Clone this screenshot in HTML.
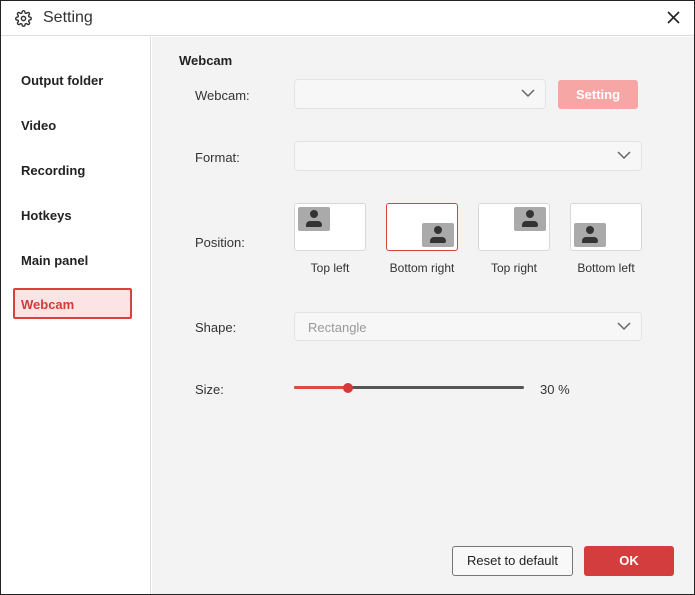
<!DOCTYPE html>
<html><head><style>
*{margin:0;padding:0;box-sizing:border-box}
body{width:695px;height:595px;font-family:"Liberation Sans",sans-serif;background:#fff;position:relative;overflow:hidden}
.a{position:absolute}
.win{left:0;top:0;width:695px;height:595px;border:1px solid #222;}
.lbl{font-size:13px;color:#333}
.nav{left:21px;font-size:13px;font-weight:bold;color:#222}
.sel{border:1px solid #e3e3e3;border-radius:4px;background:#f7f7f7}
.chev{position:absolute;right:10px;top:8px}
.th{width:72px;height:48px;background:#fff;border:1px solid #d8d8d8;border-radius:3px}
.pv{position:absolute;width:32px;height:24px;background:#aaa;border-radius:2px}
.cap{font-size:12px;color:#333;width:100px;text-align:center}
</style></head><body>
<div class="a" style="left:0;top:0;width:695px;height:36px;background:#fff;border-bottom:1px solid #ddd"></div>
<svg class="a" style="left:15px;top:10px" width="17" height="17" viewBox="0 0 24 24" fill="none" stroke="#333" stroke-width="2"><circle cx="12" cy="12" r="3"/><path d="M19.4 15a1.7 1.7 0 0 0 .3 1.8l.1.1a2 2 0 1 1-2.8 2.8l-.1-.1a1.7 1.7 0 0 0-1.800-.3 1.7 1.7 0 0 0-1 1.5V21a2 2 0 1 1-4 0v-.1a1.7 1.7 0 0 0-1.1-1.5 1.7 1.7 0 0 0-1.8.3l-.1.1a2 2 0 1 1-2.8-2.8l.1-.1a1.7 1.7 0 0 0 .3-1.8 1.7 1.7 0 0 0-1.5-1H3a2 2 0 1 1 0-4h.1a1.7 1.7 0 0 0 1.5-1.1 1.7 1.7 0 0 0-.3-1.8l-.1-.1a2 2 0 1 1 2.8-2.8l.1.1a1.7 1.7 0 0 0 1.8.3H9a1.7 1.7 0 0 0 1-1.5V3a2 2 0 1 1 4 0v.1a1.7 1.7 0 0 0 1 1.5 1.7 1.7 0 0 0 1.8-.3l.1-.1a2 2 0 1 1 2.8 2.8l-.1.1a1.7 1.7 0 0 0-.3 1.8V9a1.7 1.7 0 0 0 1.5 1H21a2 2 0 1 1 0 4h-.1a1.7 1.7 0 0 0-1.5 1z"/></svg>
<div class="a" style="left:43px;top:9px;font-size:16px;color:#333">Setting</div>
<svg class="a" style="left:667px;top:11px" width="13" height="13" viewBox="0 0 13 13" stroke="#222" stroke-width="1.6"><path d="M1 1L12 12M12 1L1 12"/></svg>
<div class="a" style="left:0;top:37px;width:151px;height:558px;background:#fff;border-right:1px solid #ddd"></div>
<div class="a" style="left:152px;top:37px;width:543px;height:558px;background:#f3f3f3"></div>
<div class="a nav" style="top:73px">Output folder</div>
<div class="a nav" style="top:118px">Video</div>
<div class="a nav" style="top:163px">Recording</div>
<div class="a nav" style="top:208px">Hotkeys</div>
<div class="a nav" style="top:253px">Main panel</div>
<div class="a" style="left:13px;top:288px;width:119px;height:31px;background:#fde4e4;border:2px solid #d94141;border-radius:2px"></div>
<div class="a nav" style="top:297px;color:#d43a3a">Webcam</div>

<div class="a" style="left:179px;top:53px;font-size:13px;font-weight:bold;color:#222">Webcam</div>
<div class="a lbl" style="left:195px;top:88px">Webcam:</div>
<div class="a sel" style="left:294px;top:79px;width:252px;height:30px"><svg class="chev" width="14" height="10" viewBox="0 0 14 10" fill="none" stroke="#666" stroke-width="1.5"><path d="M1 2l6 6 6-6"/></svg></div>
<div class="a" style="left:558px;top:80px;width:80px;height:29px;background:#f7a6a6;border-radius:3px;color:#fff;font-size:13px;font-weight:bold;text-align:center;line-height:29px">Setting</div>
<div class="a lbl" style="left:195px;top:150px">Format:</div>
<div class="a sel" style="left:294px;top:141px;width:348px;height:30px"><svg class="chev" width="14" height="10" viewBox="0 0 14 10" fill="none" stroke="#666" stroke-width="1.5"><path d="M1 2l6 6 6-6"/></svg></div>
<div class="a lbl" style="left:195px;top:235px">Position:</div>

<div class="a th" style="left:294px;top:203px"><div class="pv" style="left:3px;top:3px"></div></div>
<div class="a th" style="left:386px;top:203px;border-color:#d94141"><div class="pv" style="right:3px;bottom:3px"></div></div>
<div class="a th" style="left:478px;top:203px"><div class="pv" style="right:3px;top:3px"></div></div>
<div class="a th" style="left:570px;top:203px"><div class="pv" style="left:3px;bottom:3px"></div></div>
<svg class="a" style="left:0;top:0" width="695" height="595">
<g fill="#333">
<circle cx="314" cy="214" r="4"/><path d="M306 227v-2a4 4 0 0 1 4-4h8a4 4 0 0 1 4 4v0a2 2 0 0 1-2 2z"/>
<circle cx="438" cy="230" r="4"/><path d="M430 243v-2a4 4 0 0 1 4-4h8a4 4 0 0 1 4 4v0a2 2 0 0 1-2 2z"/>
<circle cx="530" cy="214" r="4"/><path d="M522 227v-2a4 4 0 0 1 4-4h8a4 4 0 0 1 4 4v0a2 2 0 0 1-2 2z"/>
<circle cx="590" cy="230" r="4"/><path d="M582 243v-2a4 4 0 0 1 4-4h8a4 4 0 0 1 4 4v0a2 2 0 0 1-2 2z"/>
</g></svg>
<div class="a cap" style="left:280px;top:261px">Top left</div>
<div class="a cap" style="left:372px;top:261px">Bottom right</div>
<div class="a cap" style="left:464px;top:261px">Top right</div>
<div class="a cap" style="left:556px;top:261px">Bottom left</div>

<div class="a lbl" style="left:195px;top:320px">Shape:</div>
<div class="a sel" style="left:294px;top:312px;width:348px;height:29px"><span style="position:absolute;left:13px;top:7px;font-size:13px;color:#999">Rectangle</span><svg class="chev" width="14" height="10" viewBox="0 0 14 10" fill="none" stroke="#666" stroke-width="1.5"><path d="M1 2l6 6 6-6"/></svg></div>
<div class="a lbl" style="left:195px;top:382px">Size:</div>
<div class="a" style="left:294px;top:386px;width:230px;height:3px;background:#555;border-radius:2px"></div>
<div class="a" style="left:294px;top:386px;width:54px;height:3px;background:#e04848;border-radius:2px"></div>
<div class="a" style="left:343px;top:383px;width:10px;height:10px;background:#d43a3a;border-radius:50%"></div>
<div class="a lbl" style="left:540px;top:382px">30 %</div>

<div class="a" style="left:452px;top:546px;width:121px;height:30px;border:1px solid #777;border-radius:3px;background:#f8f8f8;font-size:13px;color:#222;text-align:center;line-height:28px">Reset to default</div>
<div class="a" style="left:584px;top:546px;width:90px;height:30px;background:#d43d3d;border-radius:3px;color:#fff;font-size:13px;font-weight:bold;text-align:center;line-height:30px">OK</div>
<div class="a win"></div>
</body></html>
